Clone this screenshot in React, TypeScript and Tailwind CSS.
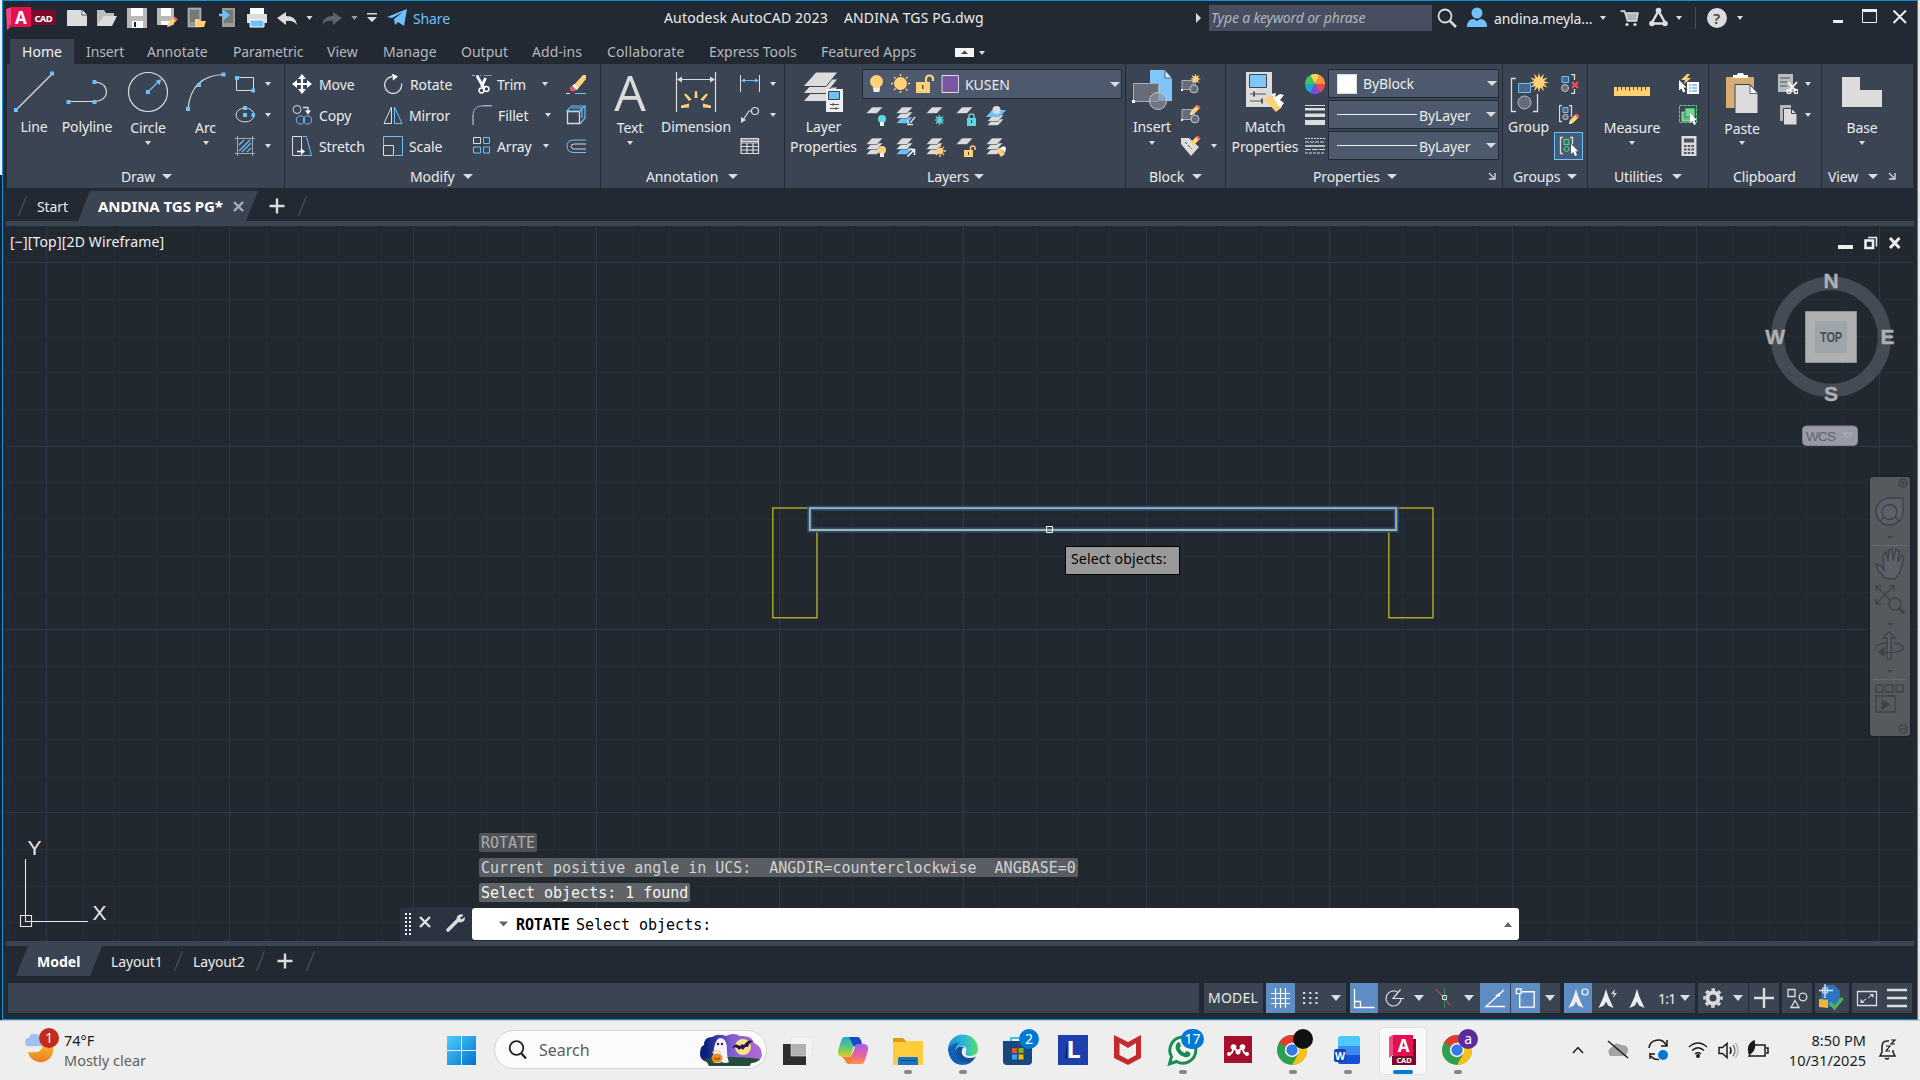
import React from "react";

const W = "#dcdcdc";
const B = "#6fc1fb";
const Y = "#ffd27a";

type Kids = { children?: React.ReactNode };

/* An icon: v is "x y width height" of its view box, drawn at natural size. */
function Ic({ v, children, className = "" }: Kids & { v: string; className?: string }) {
  const [, , w, h] = v.split(" ");
  return (
    <svg viewBox={v} width={w} height={h} fill="none" className={`block shrink-0 ${className}`}>
      {children}
    </svg>
  );
}

function Tri({ className = "" }: { className?: string }) {
  return (
    <svg viewBox="0 0 6 4" width="6" height="4" className={`block shrink-0 ${className}`}>
      <path d="M0 0h6L3 4z" fill={W} />
    </svg>
  );
}

function BigTri({ className = "" }: { className?: string }) {
  return (
    <svg viewBox="0 0 10 5" width="10" height="5" className={`block shrink-0 ${className}`}>
      <path d="M0 0h10L5 5z" fill={W} />
    </svg>
  );
}

function Panel({ className, title, children }: Kids & { className: string; title: React.ReactNode }) {
  return (
    <section className={`flex h-[124px] shrink-0 flex-col bg-[#3b4453] ${className}`}>
      <div className="flex h-[101px]">{children}</div>
      <div className="flex h-[22px] items-center">{title}</div>
    </section>
  );
}

const SEP = "border-r border-[#222933]";

function Big({ className, icon, label, second, arrow, labelClass = "" }: {
  className: string; icon: React.ReactNode; label: string; second?: string; arrow?: boolean; labelClass?: string;
}) {
  return (
    <div className={`flex shrink-0 flex-col items-center ${className}`}>
      <div className="flex h-[53px] items-start pt-1">{icon}</div>
      <div className={`h-5 leading-5 ${labelClass}`}>{label}</div>
      {second && <div className="h-5 leading-5">{second}</div>}
      {arrow && <Tri className="mt-1" />}
    </div>
  );
}

function Cell({ children, className = "" }: Kids & { className?: string }) {
  return <div className={`flex h-[31px] items-center ${className}`}>{children}</div>;
}

function Launcher({ className = "" }: { className?: string }) {
  return (
    <Ic v="0 0 8 8" className={className}>
      <path d="M1 1l5 5M7 1v6H1" stroke={W} strokeWidth="1.3" />
    </Ic>
  );
}

function Sheet({ x, y, c = W }: { x: number; y: number; c?: string }) {
  return <path d={`M${x + 6} ${y}h11l-6 6.500h-11z`} fill={c} stroke="#3b4453" strokeWidth=".6" />;
}

function Stack({ blue }: { blue?: boolean }) {
  return (
    <>
      <Sheet x={0} y={11} c={blue ? B : W} />
      <Sheet x={0} y={6} />
      <Sheet x={0} y={1} />
    </>
  );
}

function Bulb({ x, y, c = Y }: { x: number; y: number; c?: string }) {
  return (
    <g>
      <circle cx={x} cy={y} r="4" fill={c} />
      <path d={`M${x - 2} ${y + 3}h4v4h-4z`} fill="#f2f2f2" />
    </g>
  );
}

function Pencil({ x, y }: { x: number; y: number }) {
  return (
    <g transform={`translate(${x} ${y})`}>
      <path d="M0 10l1-4 6-6 3 3-6 6z" fill={Y} />
      <path d="M6 1l2-1.500 2.800 2.800L9 4z" fill="#f0565e" />
      <path d="M0 10l.8-3 2.200 2.200z" fill="#eee" />
    </g>
  );
}

function Cursor({ x, y, s = 1 }: { x: number; y: number; s?: number }) {
  return <path transform={`translate(${x} ${y}) scale(${s})`} d="M0 0v11l2.500-2 2 4.200 2.200-1L4.800 8H8z" fill="#fff" />;
}

function star(cx: number, cy: number, r: number, q: number, n: number) {
  return Array.from({ length: n * 2 }, (_, i) => {
    const a = (i * Math.PI) / n - Math.PI / 2;
    const k = i % 2 ? q : r;
    return `${cx + k * Math.cos(a)},${cy + k * Math.sin(a)}`;
  }).join(" ");
}

function TitleBar() {
  return (
    <header className="flex h-[38px] shrink-0 items-start pl-[3px] pt-[1px]">
      <Ic v="6 2 54 32">
        <path d="M6 9l6-2v19l-5 4z" fill="#f0487c" />
        <path d="M11 7h20v20H8l3-3z" fill="#e51050" />
        <path d="M31 10h25v15H31z" fill="#7b0a2c" />
        <text x="15" y="23.500" fontSize="17" fontWeight="700" fill="#fff">A</text>
        <text x="34.500" y="21.500" fontSize="9.500" fontWeight="700" fill="#fff" textLength="18">CAD</text>
      </Ic>
      <Ic v="60 2 210 32">
        <path d="M67 10h15l5 5v11H67z" fill={W} />
        <path d="M82 10v5h5" fill="#fff" stroke="#222933" strokeWidth=".8" />
        <path d="M97 10h7l2 3h8v3h-11l-4 8-2 2z" fill="#bdbdbd" />
        <path d="M103 16h14l-5 10H97z" fill={W} />
        <path d="M127 8h20v20h-20z" fill="#b9b9b9" />
        <path d="M131 8h12v8h-12zM132 21h11v7h-11z" fill="#fff" />
        <path d="M134 22h2v5h-2z" fill="#222" />
        <path d="M157 8h17v17h-17z" fill="#b9b9b9" />
        <path d="M161 8h10v8h-10zM161 21h9v4h-9z" fill="#fff" />
        <path d="M167 27l1-4 6-6 3 3-6 6z" fill={Y} />
        <path d="M173 18l2-1.500 3 3-2 1.500z" fill="#f0565e" />
        <path d="M188 8h13v19h-13z" fill="#9a9a9a" stroke="#ddd" strokeWidth=".5" />
        <path d="M190 10h9v12h-9z" fill="#777" />
        <path d="M195 19h4l1 2h6l-2 6h-9z" fill={Y} />
        <path d="M222 8h13v19h-13z" fill="#9a9a9a" />
        <path d="M224 10h9v13h-9z" fill="#777" />
        <path d="M219 15h7m-3-4l5 4-5 4" stroke={B} strokeWidth="2.500" />
        <path d="M250 8h14v7h-14z" fill="#fff" />
        <path d="M247 14h20v9h-20z" fill={W} />
        <path d="M250 20h14v7h-14z" fill={B} stroke="#fff" />
      </Ic>
      <Ic v="270 2 140 32">
        <path d="M277 18l9-6v4q10 0 11 9-4-5-11-4v4z" fill={W} />
        <path d="M306.500 16h6l-3 4z" fill={W} />
        <path d="M342 18l-9-6v4q-10 0-11 9 4-5 11-4v4z" fill="#5d6269" />
        <path d="M351.500 16h6l-3 4z" fill="#9a9da2" />
        <path d="M367 13h10v1.500h-10zM367 17h10l-5 5z" fill={W} />
        <path d="M387 17l20-8-3 17-6-4-3 3-1-6 9-7-11 6z" fill={B} />
      </Ic>
      <div className="w-[251px] pl-[3px] pt-[7px] leading-5 text-[#6fc1fb]">Share</div>
      <div className="w-[180px] whitespace-nowrap pl-[3px] pt-[6px] leading-5 tracking-[0.17px]">Autodesk AutoCAD 2023</div>
      <div className="w-[353px] whitespace-nowrap pl-[3px] pt-[6px] leading-5 tracking-[0.13px]">ANDINA TGS PG.dwg</div>
      <Ic v="1194 2 15 32"><path d="M1196 13l5 5-5 5z" fill={W} /></Ic>
      <div className="mt-[3px] h-[26px] w-[223px] shrink-0 whitespace-nowrap bg-[#464e60] pl-[2px] leading-[26px] tracking-[-0.16px] text-[#b2b6bf] italic">
        Type a keyword or phrase
      </div>
      <Ic v="1432 2 61 32">
        <circle cx="1445" cy="16" r="6.500" stroke={W} strokeWidth="1.800" />
        <path d="M1450 21l6 6" stroke={W} strokeWidth="2.500" />
        <circle cx="1477" cy="13" r="5.500" fill={B} />
        <path d="M1467 27q0-8 7-8l3 2 3-2q7 0 7 8z" fill={B} />
      </Ic>
      <div className="w-[105px] shrink-0 pl-[1px] pt-[7px] leading-5 tracking-[-0.08px]">andina.meyla...</div>
      <Ic v="1598 2 155 32">
        <path d="M1600 16h6l-3 4z" fill={W} />
        <path d="M1620.500 11h4l3 10h9l1.500-8h-13" fill="#b5b5b5" stroke={W} strokeWidth="1.500" />
        <circle cx="1627" cy="24.500" r="1.600" fill={W} /><circle cx="1635" cy="24.500" r="1.600" fill={W} />
        <path d="M1658.500 11l-7 12.500h14z" stroke={W} strokeWidth="2.500" />
        <circle cx="1658.500" cy="10.500" r="2.800" fill={W} /><circle cx="1652" cy="23.500" r="2.800" fill={W} /><circle cx="1665" cy="23.500" r="2.800" fill={W} />
        <path d="M1676 16h6l-3 4z" fill={W} />
        <path d="M1695.500 7v22" stroke="#454d5b" />
        <circle cx="1717" cy="18" r="10" fill={W} />
        <text x="1713.300" y="23.500" fontSize="15" fontWeight="600" fill="#444">?</text>
        <path d="M1737 16h6l-3 4z" fill={W} />
      </Ic>
      <Ic v="1825 2 88 32" className="ml-[72px]">
        <path d="M1833 20h10v3h-10z" fill="#eee" />
        <path d="M1862.500 10v12.500h14V10z" stroke="#eee" /><path d="M1862 9h15v3h-15z" fill="#eee" />
        <path d="M1893.500 10.500l12.500 12.500M1906 10.500L1893.500 23" stroke="#eee" strokeWidth="2" />
      </Ic>
    </header>
  );
}

function RibbonTabs() {
  return (
    <nav className="flex h-[25px] shrink-0 whitespace-nowrap pl-[7px] leading-[25px] tracking-[0px] text-[#b4b8bd]">
      <div className="w-16 bg-[#3b4453] text-center text-[#f2f2f2]">Home</div>
      <div className="w-[60px] pl-[12px] tracking-[-0.1px]">Insert</div>
      <div className="w-[86px] pl-[13px]">Annotate</div>
      <div className="w-[94px] pl-[13px] tracking-[-0.15px]">Parametric</div>
      <div className="w-[56px] pl-[13px]">View</div>
      <div className="w-[77px] pl-[13px]">Manage</div>
      <div className="w-[71px] pl-[14px]">Output</div>
      <div className="w-[76px] pl-[14px] tracking-[0.05px]">Add-ins</div>
      <div className="w-[102px] pl-[13px] tracking-[0.15px]">Collaborate</div>
      <div className="w-[112px] pl-[13px] tracking-[-0.05px]">Express Tools</div>
      <div className="w-[147px] pl-[13px] tracking-[0px]">Featured Apps</div>
      <Ic v="955 39 34 25">
        <path d="M955 48h19v9h-19z" fill="#f4f4f4" />
        <path d="M961 54h7l-3.500-3.500z" fill="#444" />
        <path d="M979 51h6l-3 4z" fill={W} />
      </Ic>
    </nav>
  );
}

const node = (x: number, y: number) => <path key={`${x}-${y}`} d={`M${x - 2} ${y - 2}h4v4h-4z`} fill={B} />;

function DrawPanel() {
  return (
    <Panel className={`w-[278px] ${SEP}`} title={<><span className="w-[155px] pl-[114px]">Draw</span><BigTri /></>}>
      <Big className="w-[54px]" label="Line" icon={
        <Ic v="12 68 44 48"><path d="M16 110L52 74" stroke={W} strokeWidth="1.200" />{node(16, 110)}{node(52, 73.500)}</Ic>} />
      <Big className="w-[52px]" label="Polyline" icon={
        <Ic v="65 68 44 48"><path d="M68 101.500h27q11-1 11.500-9.500-.5-9-11.500-10" stroke={W} strokeWidth="1.200" />{node(68.500, 102)}{node(94.500, 102)}{node(94.500, 82)}</Ic>} />
      <Big className="w-[70px]" arrow label="Circle" labelClass="translate-y-px" icon={
        <Ic v="126 68 44 48"><circle cx="148" cy="92" r="19.500" stroke={W} strokeWidth="1.200" /><path d="M148 92l9-9" stroke={B} strokeWidth="1.200" /><path d="M155.500 81l6-2-2 6z" fill={B} />{node(148, 92)}</Ic>} />
      <Big className="w-[45px]" arrow label="Arc" labelClass="translate-y-px" icon={
        <Ic v="184 68 44 48"><path d="M188 109q3-33 35-34.500" stroke={W} strokeWidth="1.200" />{node(188, 109)}{node(199, 85)}{node(223.500, 74.500)}</Ic>} />
      <div className="ml-[7px] mt-[4px] flex flex-col">
        <Cell className="w-[36px] justify-between"><Ic v="0 0 20 20"><path d="M1.500 3.500h17v13h-17z" stroke={W} />{node(2, 4)}{node(18.500, 16.500)}</Ic><Tri /></Cell>
        <Cell className="w-[36px] justify-between"><Ic v="0 0 20 20"><ellipse cx="10" cy="10" rx="9" ry="7" stroke={W} />{node(10, 3)}{node(10, 10)}{node(18.500, 10)}</Ic><Tri /></Cell>
        <Cell className="w-[36px] justify-between"><Ic v="0 0 20 20"><path d="M2.500 0v20M17.500 0v20M0 2.500h20M0 17.500h20" stroke="#a5a9af" /><path d="M4 9l5-5M4 15L15 4M7 16l9-9M12 16l4-4" stroke={B} strokeWidth="1.200" /></Ic><Tri /></Cell>
      </div>
    </Panel>
  );
}

function Tool({ icon, children, arrow, gap = "pl-[7px]" }: Kids & { icon: React.ReactNode; arrow?: string; gap?: string }) {
  return (
    <Cell>
      {icon}
      <span className={`pt-px ${gap}`}>{children}</span>
      {arrow && <Tri className={arrow} />}
    </Cell>
  );
}

function ModifyPanel() {
  return (
    <Panel className={`w-[316px] ${SEP}`} title={<><span className="w-[178px] pl-[125px]">Modify</span><BigTri /></>}>
      <div className="ml-[7px] mt-[4px] w-[90px]">
        <Tool icon={<Ic v="0 0 20 20"><path d="M10 2v16M2 10h16" stroke="#fff" strokeWidth="2.200" /><path d="M10 0l4 5H6zM10 20l4-5H6zM0 10l5-4v8zM20 10l-5-4v8z" fill="#fff" /></Ic>}>Move</Tool>
        <Tool icon={<Ic v="0 0 20 20"><circle cx="5" cy="4.500" r="4" stroke={W} /><path d="M11 2.500h5v4" stroke={W} strokeWidth="1.300" /><path d="M13 5.500h6l-3 4z" fill="#fff" /><circle cx="8.500" cy="15" r="4.200" stroke={B} /><circle cx="15.500" cy="15" r="4.200" stroke={B} /></Ic>}>Copy</Tool>
        <Tool icon={<Ic v="0 0 20 20"><path d="M.5.500h9v19h-9z" stroke={W} /><path d="M10.500.500h4l5 19h-9" stroke={B} /><path d="M5 15.500h6m-2-2.500l3 2.500-3 2.500" stroke="#fff" strokeWidth="1.300" /></Ic>}>Stretch</Tool>
      </div>
      <div className="mt-[4px] w-[90px] pl-px">
        <Tool gap="pl-[7px]" icon={<Ic v="0 0 20 20"><path d="M9 2.500a8.500 8.500 0 1 0 9.500 7" stroke={W} strokeWidth="1.300" /><path d="M9-.5l6 3-5 4z" fill="#fff" /></Ic>}>Rotate</Tool>
        <Tool gap="pl-[6px]" icon={<Ic v="0 0 20 20"><path d="M8.500 2v16.500H1z" stroke={W} /><path d="M11.500 2v16.500H19z" stroke={B} /></Ic>}>Mirror</Tool>
        <Tool gap="pl-[6px]" icon={<Ic v="0 0 20 20"><path d="M.5 9V.5h19v19H12" stroke={B} /><path d="M.5 9.500h10v10H.5z" stroke={W} /></Ic>}>Scale</Tool>
      </div>
      <div className="mt-[4px] w-[94px]">
        <Tool arrow="ml-[15px]" gap="w-[35px] pl-[5px]" icon={<Ic v="0 0 20 20"><path d="M0 1.500h9" stroke={B} strokeDasharray="3 1" /><path d="M12 1.500h8" stroke="#8d949e" /><path d="M5 2l7 12M13.500 4l-4 9" stroke="#fff" strokeWidth="2.800" /><circle cx="9.500" cy="16.500" r="2.400" stroke="#fff" strokeWidth="1.500" /><circle cx="14.500" cy="15" r="2.400" stroke="#fff" strokeWidth="1.500" /></Ic>}>Trim</Tool>
        <Tool arrow="ml-[18px]" gap="w-[35px] pl-[6px]" icon={<Ic v="0 0 20 20"><path d="M1 10Q1 1 11 .8" stroke={B} /><path d="M1 10v10M11 .8h9" stroke={W} /></Ic>}>Fillet</Tool>
        <Tool arrow="ml-[16px]" gap="w-[35px] pl-[5px]" icon={<Ic v="0 0 20 20"><path d="M1.500 1.500h7v6h-7z" stroke={W} /><path d="M11.500 1.500h6v6h-6zM1.500 11h7v6h-7zM11.500 11h6v6h-6z" stroke={B} /></Ic>}>Array</Tool>
      </div>
      <div className="mt-[4px]">
        <Cell><Ic v="0 0 20 20"><path d="M7 12L17 1h3v4L11 16z" fill={Y} /><path d="M6 12l4 4 2-1.500L8.500 10z" fill="#fff" /><path d="M4 16q-1-3 2-4l4 4q-3 3-6 0z" fill="#f0565e" /><path d="M0 19.500h4" stroke={W} /><path d="M9 19.500h11" stroke={B} /></Ic></Cell>
        <Cell><Ic v="0 0 20 20"><path d="M1.500 6.500h12v12h-12z" stroke={W} strokeWidth="1.300" /><path d="M.8 6L6 1h13L14 6zM19 1v12l-5 6M6 3h10v10" stroke={B} strokeWidth="1.200" /></Ic></Cell>
        <Cell><Ic v="0 0 20 20"><path d="M20 4H8q-7 0-7 6 0 6.500 7 6.500h12" stroke={B} /><path d="M20 8H8.500q-3.500 0-3.500 2.300 0 2.700 3.500 2.700H20" stroke={W} /></Ic></Cell>
      </div>
    </Panel>
  );
}

function AnnotationPanel() {
  return (
    <Panel className={`w-[184px] ${SEP}`} title={<><span className="w-[127px] whitespace-nowrap pl-[45px]">Annotation</span><BigTri /></>}>
      <div className="flex w-[58px] shrink-0 flex-col items-center">
        <div className="mt-[3px] h-[50px] w-[34px] text-center font-['Open_Sans',sans-serif] text-[50px] leading-[50px] tracking-normal text-[#dcdcdc]">A</div>
        <div className="h-5 translate-y-px leading-5">Text</div>
        <Tri className="mt-1" />
      </div>
      <Big className="w-[74px]" label="Dimension" icon={
        <Ic v="674 68 44 48">
          <path d="M676.500 72v40M715.500 72v40M678 79.500h36" stroke={W} strokeWidth="1.200" />
          <path d="M677 79.500l5-3v6zM715 79.500l-5-3v6z" fill={W} />
          <path d="M694.500 98l.5-7h2l.5 7zM684 94.500l2-1 5.500 6-2.500 1.500zM708 94.500l-2-1-5.500 6 2.500 1.500zM681 105.500l8-2v4l-8 .5zM711 105.500l-8-2v4l8 .5z" fill={Y} />
        </Ic>} />
      <div className="ml-[7px] mt-[4px]">
        <Cell className="w-[36px] justify-between"><Ic v="0 0 20 20"><path d="M.5 1v17M19.500 1v17" stroke={W} /><path d="M2 6.500h16" stroke={B} /><path d="M1 6.500l4-2v4zM19 6.500l-4-2v4z" fill={B} /></Ic><Tri /></Cell>
        <Cell className="w-[36px] justify-between"><Ic v="0 0 20 20"><circle cx="15" cy="6" r="3.500" stroke={W} strokeWidth="1.200" /><path d="M11.500 6H9l-6 9" stroke={W} strokeWidth="1.200" /><path d="M1 18v-6l5 3z" fill={W} /></Ic><Tri /></Cell>
        <Cell><Ic v="0 0 20 20"><path d="M1 2h18v4H1z" fill={W} /><path d="M1 2.500h17.500v15H1zM1 7h18M1 10.500h18M1 14h18M7 7v11M13 7v11" stroke={W} strokeWidth="1.200" /><path d="M2 4h16" stroke="#3b4453" /></Ic></Cell>
      </div>
    </Panel>
  );
}

function LayersPanel() {
  return (
    <Panel className={`w-[341px] ${SEP}`} title={<><span className="w-[189px] pl-[142px]">Layers</span><BigTri /></>}>
      <Big className="w-[77px]" label="Layer" second="Properties" icon={
        <Ic v="803 68 44 48">
          <path d="M817 87h22l-12 14.500h-23z" fill={W} stroke="#3b4453" />
          <path d="M817 79h22l-12 14.500h-23z" fill={W} stroke="#3b4453" />
          <path d="M817 72h22l-12 14.500h-23z" fill={W} stroke="#3b4453" />
          <path d="M827 89h17v23h-17z" fill="#f0f0f0" />
          <path d="M829.500 91.500h11v8h-11z" fill={B} stroke="#3b4453" />
          <path d="M831 104.500h9M831 108.500h9M834 103v3M837 107v3" stroke="#555" />
        </Ic>} />
      <div className="mt-[5px]">
        <div className="flex h-[30px] w-[260px] items-center border border-[#232a36] bg-[#4d596c]">
          <Ic v="863 70 99 28">
            <circle cx="876.500" cy="81.500" r="6.500" fill={Y} /><path d="M873 86h7v4h-7z" fill={Y} /><path d="M873.500 88h6v4h-6z" fill="#eee" />
            <circle cx="900.500" cy="83.500" r="6.500" fill={Y} />
            <path d="M900.500 74v2m0 15v2M891 83.500h2m15 0h2M894 77l1.500 1.500m10.500 10.500l1.500 1.500M894 90l1.500-1.500M906 78.500l1.500-1.500" stroke={Y} strokeWidth="1.500" />
            <path d="M916 82h14v11h-14z" fill={Y} /><path d="M926 82v-3q0-3.500 3.500-3.500t3.500 3.500v2" stroke={Y} strokeWidth="2.200" /><path d="M922 85h1.500v4H922z" fill="#554" />
            <path d="M942 75.500h16.500v17H942z" fill="#7c55a5" stroke="#ddd" />
          </Ic>
          <span className="w-[148px] pl-[3px] tracking-[-0.05px]">KUSEN</span>
          <BigTri />
        </div>
        <div className="ml-1 mt-[1px] flex h-[31px] items-center gap-[10px]">
          <Ic v="0 0 20 20"><Sheet x={0} y={1} /><Bulb x={16} y={13} c="#5fd8e0" /></Ic>
          <Ic v="0 0 20 20"><Stack blue /><path d="M19 11l-5 6m-2-3v4.500h5" stroke={W} strokeWidth="1.500" /></Ic>
          <Ic v="0 0 20 20"><Sheet x={0} y={1} /><path d="M13.500 9v10M9 14h9M10 10.500l7 7M17 10.500l-7 7" stroke="#5fd8e0" strokeWidth="1.200" /><circle cx="13.500" cy="14" r="2.800" stroke="#5fd8e0" strokeWidth=".9" /></Ic>
          <Ic v="0 0 20 20"><Sheet x={0} y={1} /><path d="M11 12h9v8h-9z" fill="#5fd8e0" /><path d="M13 12v-2q0-2 2.500-2t2.500 2v2" stroke="#5fd8e0" strokeWidth="1.500" /><path d="M15 14h1v3h-1z" fill="#234" /></Ic>
          <Ic v="0 0 20 20"><Sheet x={1} y={13} /><Sheet x={1} y={9} /><path d="M6 4h14l-6 7H0z" fill={B} /><circle cx="10.500" cy="4" r="4" fill={W} /></Ic>
        </div>
        <div className="ml-1 flex h-[31px] items-center gap-[10px]">
          <Ic v="0 0 20 20"><Stack /><Bulb x={16} y={13} /></Ic>
          <Ic v="0 0 20 20"><Stack blue /><path d="M11.500 19.500l6-6m-4-1h5V18" stroke="#fff" strokeWidth="1.500" /></Ic>
          <Ic v="0 0 20 20"><Stack /><circle cx="14" cy="14" r="3.500" fill={Y} /><path d="M14 8v2m0 8v2M8 14h2m8 0h2M10 10l1 1m6 6l1 1M10 18l1-1m6-6l1-1" stroke={Y} strokeWidth="1.400" /></Ic>
          <Ic v="0 0 20 20"><Sheet x={0} y={1} /><path d="M8 13h9v7H8z" fill={Y} /><path d="M14.500 13v-2q0-2 2.200-2t2.300 2v2" stroke={Y} strokeWidth="1.500" /><path d="M12 15h1v3h-1z" fill="#443" /></Ic>
          <Ic v="0 0 20 20"><Stack /><path d="M10 13l4-2 5 6-4 3z" fill={Y} /><path d="M14 11l4-2 2 2-1 5z" fill="#fff" /></Ic>
        </div>
      </div>
    </Panel>
  );
}

function BlockPanel() {
  return (
    <Panel className={`w-[100px] ${SEP}`} title={<><span className="w-[66px] pl-[23px] tracking-[-0.05px]">Block</span><BigTri /></>}>
      <Big className="w-[52px]" arrow label="Insert" labelClass="" icon={
        <Ic v="1130 68 44 48">
          <path d="M1150 70h15l7 8v23h-22z" fill="#7fc6fb" /><path d="M1165 70v8h7z" fill="#d5edff" stroke="#3b4453" strokeWidth=".8" />
          <path d="M1133.500 83.500h25v18h-25z" fill="#676d78" stroke="#a9adb4" />
          <circle cx="1158" cy="101" r="8.500" fill="#8b929e" fillOpacity=".65" stroke="#c3c6ca" />
          <path d="M1132 100h3v3h-3z" fill="#fff" />
        </Ic>} />
      <div className="ml-[3px] mt-[4px]">
        <Cell><Ic v="0 0 20 20"><path d="M1 6.500h12v9H1z" fill="#676d78" stroke="#a9adb4" /><circle cx="13" cy="15" r="4" fill="#676d78" stroke="#c3c6ca" /><polygon points={star(14.500, 5, 5.500, 2.600, 8)} fill={Y} /><path d="M0 15h2v2H0z" fill="#fff" /></Ic></Cell>
        <Cell><Ic v="0 0 20 20"><path d="M1 4.500h12v10H1z" fill="#676d78" stroke="#a9adb4" /><circle cx="14" cy="14" r="4" fill="#676d78" stroke="#c3c6ca" /><Pencil x={9} y={0} /><path d="M0 14h2v2H0z" fill="#fff" /></Ic></Cell>
        <Cell className="w-[36px] justify-between"><Ic v="0 0 20 20"><path d="M0 2h8l10 9-8 9L0 8z" fill={W} /><path d="M4 6l7 7" stroke="#3b4453" strokeDasharray="3 1.500" /><Pencil x={9} y={0} /></Ic><Tri /></Cell>
      </div>
    </Panel>
  );
}

function Combo({ children }: Kids) {
  return <div className="flex h-[29px] w-[171px] items-center border border-[#232a36] bg-[#4d596c]">{children}</div>;
}

function PropertiesPanel() {
  return (
    <Panel className={`w-[277px] ${SEP}`} title={<><span className="w-[161px] pl-[87px]">Properties</span><BigTri /><Launcher className="ml-[91px]" /></>}>
      <Big className="w-[78px]" label="Match" second="Properties" icon={
        <Ic v="1243 68 44 48">
          <path d="M1246 72h26v35h-26z" fill={W} /><path d="M1249.500 74.500h17v13h-17z" fill="#7fc6fb" stroke="#3b4453" />
          <path d="M1250 94h16M1250 101h13" stroke="#555" /><path d="M1254 91.500v5M1262 98.500v5" stroke="#555" strokeWidth="2" />
          <path d="M1264 99l7-4 11 12-6 5z" fill={Y} /><path d="M1271 94l5-1-1 4 5-3 4 1-4 5 4 3-4 5z" fill="#fff" />
        </Ic>} />
      <div className="ml-px mt-[4px] flex w-[23px] flex-col">
        <Cell>
          <Ic v="-10 -10 20 20">
            <path d="M0 0L-4.900-8.700A10 10 0 0 1 4.900-8.700z" fill="#ffd24d" /><path d="M0 0L4.900-8.700A10 10 0 0 1 10 0z" fill="#ff9340" />
            <path d="M0 0H10A10 10 0 0 1 4.900 8.700z" fill="#e6484f" /><path d="M0 0L4.900 8.700A10 10 0 0 1-4.900 8.700z" fill="#7b4de0" />
            <path d="M0 0L-4.900 8.700A10 10 0 0 1-10 0z" fill="#18a9d0" /><path d="M0 0H-10A10 10 0 0 1-4.900-8.700z" fill="#49bf68" />
          </Ic>
        </Cell>
        <Cell><Ic v="0 0 20 20"><path d="M0 0h20v1H0zM0 3h20v2.500H0zM0 8.500h20V12H0zM0 15h20v5H0z" fill={W} /></Ic></Cell>
        <Cell><Ic v="0 0 20 20"><path d="M0 2.500h20" stroke={W} strokeDasharray="2 1" /><path d="M0 6h20" stroke={W} strokeDasharray="4 1" /><path d="M0 10h20" stroke={W} strokeWidth="1.500" /><path d="M0 13.500h20" stroke={W} strokeDasharray="6 1" /><path d="M0 17h20" stroke={W} strokeDasharray="3 1" /></Ic></Cell>
      </div>
      <div className="mt-[5px] flex flex-col gap-[2px]">
        <Combo><div className="ml-2 h-5 w-5 border border-[#ddd] bg-white" /><span className="w-[130px] pl-[6px]">ByBlock</span><BigTri /></Combo>
        <Combo><div className="ml-2 h-px w-20 bg-[#eee]" /><span className="w-[64px] pl-[2px] pt-px">ByLayer</span><BigTri className="ml-[5px]" /></Combo>
        <Combo><div className="ml-2 h-px w-20 bg-[#eee]" /><span className="w-[64px] pl-[2px] pt-px">ByLayer</span><BigTri className="ml-[5px]" /></Combo>
      </div>
    </Panel>
  );
}

function GroupsPanel() {
  return (
    <Panel className={`w-[85px] ${SEP}`} title={<><span className="w-[64px] pl-[10px]">Groups</span><BigTri /></>}>
      <Big className="w-[51px]" label="Group" icon={
        <Ic v="1506 68 44 48">
          <path d="M1515 78.500h-4.500v33h4.500M1532 111.500h4.500V94" stroke={W} strokeWidth="1.300" />
          <path d="M1517.500 83.500h12v9h-12z" fill="#44688c" stroke={B} /><circle cx="1523.500" cy="102.500" r="6.500" fill="#676d78" stroke="#b5b8bd" />
          <polygon points={star(1538, 82.500, 10, 5, 12)} fill={Y} />
        </Ic>} />
      <div className="mt-[4px] flex w-[29px] flex-col items-center">
        <Cell><Ic v="0 0 20 20"><path d="M3 2.500h6.500v6H3z" fill="#44688c" stroke={B} /><circle cx="6" cy="14" r="3.500" fill="#676d78" stroke="#c3c6ca" /><path d="M12 .5h3.500V6M15.500 15v4.500H12" stroke={W} strokeWidth="1.300" /><path d="M13 8l6 6M19 8l-6 6" stroke="#f0505a" strokeWidth="2.200" /></Ic></Cell>
        <Cell><Ic v="0 0 20 20"><path d="M3 .5H.5v16H3M10 .5h2.500V12" stroke={W} strokeWidth="1.300" /><path d="M4 2.500h5v5H4z" fill="#44688c" stroke={B} /><circle cx="6.500" cy="12" r="2.700" fill="#676d78" stroke="#c3c6ca" /><Pencil x={10} y={9} /></Ic></Cell>
        <div className="mt-[2px] flex h-7 w-[29px] items-center justify-center border border-[#6fc1fb] bg-[#455b78]"><Ic v="0 0 20 20"><path d="M4 1.500H1.500v16H4M11 1.500h2.500V8" stroke={W} strokeWidth="1.300" /><path d="M5 3.500h5v5H5zM7.500 10.500a2.500 2.500 0 1 0 .1 0z" fill="#2f7a50" stroke="#6ad18e" /><Cursor x={12} y={8} s={0.9} /></Ic></div>
      </div>
    </Panel>
  );
}

function UtilitiesPanel() {
  return (
    <Panel className={`w-[121px] ${SEP}`} title={<><span className="w-[84px] pl-[26px]">Utilities</span><BigTri /></>}>
      <Big className="w-[88px]" arrow label="Measure" labelClass="translate-y-px" icon={
        <Ic v="1610 68 44 48"><path d="M1614 87h36v9h-36z" fill={Y} /><path d="M1617.500 87v4M1621.500 87v3M1625.500 87v3M1629.500 87v4M1633.500 87v3M1637.500 87v3M1641.500 87v4M1645.500 87v3" stroke="#5c4c2c" /></Ic>} />
      <div className="ml-[3px] mt-[4px]">
        <Cell><Ic v="0 0 20 20"><path d="M8 0l-6 6h4l-1 4 7-6H8l3-4z" fill={Y} /><path d="M8 8h12v12H8z" fill="#fff" /><path d="M10 11h2m1 0h5M10 14h2m1 0h5M10 17h2m1 0h5" stroke="#3c8fd8" strokeWidth="1.200" /><Cursor x={0} y={6} s={0.95} /></Ic></Cell>
        <Cell><Ic v="0 0 20 20"><path d="M.5.500h17v17H.5z" stroke="#5fd080" strokeDasharray="3 1" /><path d="M3 7h9v9H3z" fill="#5fc583" stroke="#a4e7b9" /><path d="M6 3h10v9H6z" fill="#76d394" stroke="#2d6e45" strokeWidth=".7" /><Cursor x={11} y={8} s={0.9} /></Ic></Cell>
        <Cell><Ic v="0 0 20 20"><path d="M2.500 0h15v20h-15z" fill={W} /><path d="M5 2.500h10v4H5z" fill="#4a5260" /><path d="M5 10h10M5 13.500h10M5 17h10" stroke="#4a5260" strokeWidth="2" strokeDasharray="2.500 1.200" /></Ic></Cell>
      </div>
    </Panel>
  );
}

function ClipboardPanel() {
  return (
    <Panel className={`w-[113px] ${SEP}`} title={<span className="pl-[24px]">Clipboard</span>}>
      <Big className="w-[66px]" arrow label="Paste" labelClass="translate-y-[2px]" icon={
        <Ic v="1720 68 44 48">
          <path d="M1726 77h28v31h-28z" fill="#d8ab73" /><path d="M1733 77v-2h4l1-2h5l1 2h4v3h-15z" fill="#fff" />
          <path d="M1735 84.500h15l8 9v20h-23z" fill={W} stroke="#3b4453" /><path d="M1750 85v8.500h8z" fill="#fff" stroke="#3b4453" strokeWidth=".8" />
        </Ic>} />
      <div className="ml-[3px] mt-[4px]">
        <Cell className="w-[33px] justify-between"><Ic v="0 0 20 20"><path d="M0 0h15v18H0z" fill="#b8bbbf" /><path d="M2 4h10M2 8h8M2 12h7" stroke="#4a5260" strokeWidth="1.200" /><path d="M10 8l8 9M19 8l-8 9" stroke="#fff" strokeWidth="1.800" /><circle cx="11" cy="17.500" r="2" stroke="#fff" strokeWidth="1.300" /><circle cx="18" cy="17.500" r="2" stroke="#fff" strokeWidth="1.300" /></Ic><Tri /></Cell>
        <Cell className="w-[33px] justify-between"><Ic v="0 0 20 20"><path d="M2 0h11v16H2z" fill="#b3b6ba" /><path d="M5.500 3.500h8l5.500 5V20H5.500z" fill={W} stroke="#3b4453" /><path d="M13.500 3.500v5H19" stroke="#3b4453" /></Ic><Tri /></Cell>
      </div>
    </Panel>
  );
}

function ViewPanel() {
  return (
    <Panel className="w-[91px]" title={<><span className="w-[46px] pl-[6px]">View</span><BigTri /><Launcher className="ml-[10px]" /></>}>
      <Big className="w-[80px]" arrow label="Base" labelClass="translate-y-px" icon={
        <Ic v="1840 68 44 48"><path d="M1842 77h18v13h22v17h-40z" fill={W} /></Ic>} />
    </Panel>
  );
}

function Slash({ className = "" }: { className?: string }) {
  return <Ic v="0 0 9 20" className={className}><path d="M.5 20L8.500 0" stroke="#4b5361" strokeWidth="1.200" /></Ic>;
}

function Plus({ className = "" }: { className?: string }) {
  return <Ic v="0 0 16 16" className={className}><path d="M8 .5v15M.5 8h15" stroke={W} strokeWidth="2.400" /></Ic>;
}

function DocTabs() {
  return (
    <div className="flex h-[33px] shrink-0 items-center pl-[15px]">
      <Slash className="mt-[2px]" />
      <span className="w-[51px] pl-[10px] pt-[3px]">Start</span>
      <div className="flex h-[30px] w-[180px] items-center self-end bg-[#3b4453] font-bold [clip-path:polygon(12px_0,100%_0,168px_100%,0_100%)]">
        <span className="w-[155px] whitespace-nowrap pl-5 text-[15px] tracking-[-0.05px] text-white">ANDINA TGS PG*</span>
        <Ic v="0 0 11 11"><path d="M1 1l9 9M10 1l-9 9" stroke="#a9adb4" strokeWidth="2.400" /></Ic>
      </div>
      <Plus className="ml-[11px] mt-[3px]" />
      <Slash className="ml-[13px] mt-[2px]" />
    </div>
  );
}

function NavBar() {
  const s = "#3e434a";
  return (
    <Ic v="1870 477 40 259" className="rounded-[3px] bg-[#555a5f] shadow-[0_0_3px_#14181e]">
      <g stroke={s} strokeWidth="1.400">
        <circle cx="1903" cy="483" r="4" /><path d="M1901 481l4 4M1905 481l-4 4" />
        <path d="M1890 498h13v14a13.500 13.500 0 1 1-13-14z" fill="#5b6069" /><circle cx="1889.500" cy="512" r="7.500" /><path d="M1880 521l4-4M1899 521l-4-4" />
        <path d="M1885 578l-7-8-2-6 5 2 3 4-1-14 3-4 2 9 1-11 3-1 1 11 3-10 3 1-1 11 4-7 2 2-4 15-5 7z" fill="#5b6069" />
        <path d="M1876 586l18 18M1894 586l-18 18M1876 591v-5h5M1889 586h5v5M1876 599v5h5" /><circle cx="1895" cy="604" r="6" fill="#555a5f" />
        <path d="M1899 608l5 5" strokeWidth="3" />
        <path d="M1887 659v-21h-4l6-6 6 6h-4v21z" fill="#5b6069" /><path d="M1894 643q12 2 9 6-5 5-22 3m5-9q-13 2-10 6" /><path d="M1884 648v8l-5-4z" fill={s} />
        <path d="M1876 685h7v7h-7zM1886 685h7v7h-7zM1896 685h7v7h-7zM1876 696h19v16h-19z" /><path d="M1882 700v9l7-4.500z" fill={s} />
        <circle cx="1903" cy="729" r="4" /><path d="M1900 729h6" />
      </g>
      <path d="M1887 536h6l-3 3zM1887 623h6l-3 3zM1887 670h6l-3 3z" fill={s} />
      <path d="M1873 545.500h34M1873 679.500h34" stroke="#646a70" />
    </Ic>
  );
}

const majorX = Array.from({ length: 11 }, (_, i) => Math.round(46 + i * 183.3) + 0.5);
const minorX = Array.from({ length: 52 }, (_, i) => Math.round(9.3 + i * 36.66) + 0.5);
const majorY = Array.from({ length: 4 }, (_, i) => Math.round(262.4 + i * 183.3) + 0.5);
const minorY = Array.from({ length: 20 }, (_, i) => Math.round(225.8 + i * 36.66) + 0.5);

function History({ children, className }: Kids & { className: string }) {
  return <div className={`h-[19px] w-fit whitespace-pre rounded-[2px] px-[2px] leading-[20px] ${className}`}>{children}</div>;
}

function Canvas() {
  return (
    <main className="relative ml-[3px] h-[715px] w-[1908px] shrink-0 overflow-hidden bg-[#222830]">
      <Ic v="6 226 1908 715">
        {minorX.map((x) => <path key={x} d={`M${x} 226V941`} stroke="#262d38" />)}
        {minorY.map((y) => <path key={y} d={`M6 ${y}H1914`} stroke="#262d38" />)}
        {majorX.map((x) => <path key={x} d={`M${x} 226V941`} stroke="#2f3645" />)}
        {majorY.map((y) => <path key={y} d={`M6 ${y}H1914`} stroke="#2f3645" />)}
        <g stroke="#aba51f" strokeWidth="1.500">
          <path d="M809 508H772.800V617.700H817V530M1396 508h37V617.700h-44.200V530" />
        </g>
        <path d="M809.800 508.200H1396.200V530H809.800z" stroke="#2a4c8c" strokeWidth="5" />
        <path d="M809.800 508.200H1396.200V530H809.800z" stroke="#a7b78f" strokeWidth="1.800" />
        <path d="M1046.500 526.500h6v6h-6z" stroke="#fff" />
        <path d="M25.500 859v62.500H88M20.500 915.500h11v11h-11z" stroke="#e8e8e8" strokeWidth="1.100" />
        <g fill="#e8e8e8" fontFamily="Liberation Sans, sans-serif" fontSize="21">
          <text x="27.500" y="854.500">Y</text>
          <text x="92.500" y="919.500">X</text>
        </g>
        <circle cx="1831" cy="337" r="53.500" stroke="#454b54" strokeWidth="13.500" />
        <path d="M1805.500 311.500h51v51h-51z" fill="#aeb0b2" stroke="#8e9194" />
        <path d="M1815 321h32v32h-32z" fill="#9ea4aa" />
        <g fill="#adafb2" stroke="#adafb2" strokeWidth=".4" fontFamily="Liberation Sans, sans-serif" fontWeight="700" fontSize="21" textAnchor="middle">
          <text x="1831" y="288">N</text>
          <text x="1775" y="344">W</text>
          <text x="1887.500" y="344">E</text>
          <text x="1831" y="400.500">S</text>
          <text x="1831" y="342" fontSize="14" fill="#4a4f57" stroke="none" textLength="22" lengthAdjust="spacingAndGlyphs">TOP</text>
        </g>
        <rect x="1802.500" y="426" width="55" height="19.500" rx="4" fill="#9a9ba7" stroke="#81838d" />
        <text x="1806" y="440.500" fontFamily="Liberation Sans, sans-serif" fontSize="13.500" fill="#62656f" textLength="30">WCS</text>
        <path d="M1843 433h9l-4.500 4.500z" stroke="#b4b5bf" />
        <path d="M1838 245h15v4h-15z" fill="#eee" />
        <path d="M1865.500 240.500h7.500v7.500h-7.500z" stroke="#eee" strokeWidth="2.600" /><path d="M1868 237.500h8.500v9" stroke="#eee" strokeWidth="1.500" />
        <path d="M1890 238l9.500 10M1899.500 238l-9.500 10" stroke="#eee" strokeWidth="3" />
      </Ic>
      <div className="absolute left-1 top-[6px] whitespace-nowrap leading-5 tracking-[0.17px] text-[#f0f0f0]">[−][Top][2D Wireframe]</div>
      <div className="absolute right-1 top-[251px]"><NavBar /></div>
      <div className="absolute left-[1059px] top-[320px] h-[29px] w-[115px] whitespace-nowrap border border-black bg-[#999] pl-[5px] leading-[24px] tracking-[0.15px] text-black">Select objects:</div>
      <div className="absolute bottom-0 left-[394px] flex h-[108px] w-[1120px] flex-col font-['DejaVu_Sans_Mono',monospace] text-[15px] tracking-[-0.02px]">
        <div className="flex h-[74px] flex-col gap-[6px] pl-[79px]">
          <History className="bg-[#4f5357] text-[#a9acaf]">ROTATE</History>
          <History className="bg-[#595c60] text-[#d0d2d4]">{"Current positive angle in UCS:  ANGDIR=counterclockwise  ANGBASE=0"}</History>
          <History className="bg-[#616466] text-[#f4f4f4]">Select objects: 1 found</History>
        </div>
        <div className="flex h-[34px]">
          <Ic v="400 907 72 34" className="rounded-l bg-[#2c3340]">
            <path d="M406 913v22M410 913v22" stroke="#eee" strokeWidth="2" strokeDasharray="2 2" />
            <path d="M420 917l10 10M430 917l-10 10" stroke="#e0e0e0" strokeWidth="2.400" />
            <path d="M448 930l11-11" stroke={W} strokeWidth="3.600" strokeLinecap="round" />
            <path d="M463.500 915.500q-3-2.500-6 .5-2 3 .5 5.500 3 2 6-.5 1.500-2 .8-4l-3.500 2.500-1.500-1.500z" fill={W} />
          </Ic>
          <div className="my-[1px] flex w-[1047px] items-center rounded-[3px] bg-white text-black">
            <Ic v="0 0 9 6" className="ml-[27px]"><path d="M0 .5h9L4.500 5.500z" fill="#666" /></Ic>
            <span className="ml-2 w-[60px] whitespace-nowrap pt-[2px] font-bold tracking-[-0.1px]">ROTATE</span>
            <span className="w-[928px] pt-[2px]">Select objects:</span>
            <Ic v="0 0 8 5"><path d="M0 5h8L4 0z" fill="#666" /></Ic>
          </div>
        </div>
      </div>
    </main>
  );
}

function LayoutTabs() {
  return (
    <div className="flex h-[37px] shrink-0 items-start pl-[13px]">
      <div className="h-[30px] w-[86px] bg-[#3b4453] pl-[21px] font-bold leading-[31px] tracking-[0px] text-white [clip-path:polygon(12px_0,100%_0,74px_100%,0_100%)]">Model</div>
      <span className="w-[72px] pl-[9px] leading-[31px]">Layout1</span>
      <Slash className="mt-[5px]" />
      <span className="w-[73px] pl-[10px] leading-[31px]">Layout2</span>
      <Slash className="mt-[5px]" />
      <Plus className="ml-[12px] mt-[7px]" />
      <Slash className="ml-[13px] mt-[5px]" />
    </div>
  );
}

function Compass({ x }: { x: number }) {
  return <path d={`M${x} 989l2.500 8 5 11-5.500-2.500-2-4-2 4-5.500 2.500 5-11z`} fill="#eee" />;
}

function StatusBar() {
  const p = "bg-[#3b4453]";
  const on = "bg-[#5d8dc3]";
  return (
    <div className="flex h-[30px] shrink-0 pl-[5px]">
      <div className={`w-[1191px] ${p}`} />
      <div className={`ml-[5px] w-[59px] pl-[4px] leading-[30px] tracking-[0.2px] ${p}`}>MODEL</div>
      <Ic v="1266 983 29 30" className={`ml-[3px] ${on}`}><path d="M1275.500 988v20M1280.500 988v20M1285.500 988v20M1271 993.500h19M1271 998.500h19M1271 1003.500h19" stroke="#fff" strokeWidth="1.200" /></Ic>
      <Ic v="1295 983 51 30" className={p}>
        {[992, 997, 1002].map((y) => <path key={y} d={`M1303 ${y + 1}h15`} stroke={W} strokeWidth="2.200" strokeDasharray="2.200 4" />)}
        <path d="M1331 995h10l-5 6z" fill={W} />
      </Ic>
      <Ic v="1350 983 28 30" className={`ml-1 ${on}`}><path d="M1354.500 989v18.500h20M1354.500 1001.500h6v6" stroke="#fff" strokeWidth="1.300" /></Ic>
      <Ic v="1378 983 102 30" className={p}>
        <path d="M1398 992.500a7.500 7.500 0 1 0 3 6M1404 998.500h-11l7.500-9" stroke={W} strokeWidth="1.200" /><path d="M1414 995h10l-5 6z" fill={W} />
        <path d="M1436 989l14 16" stroke="#b24b50" strokeWidth="1.200" /><path d="M1444.500 988v20" stroke="#3b8a60" /><path d="M1442.500 995.500h4v4h-4z" stroke={W} /><path d="M1464 995h10l-5 6z" fill={W} />
      </Ic>
      <Ic v="1480 983 30 30" className={on}><path d="M1504 990l-18 16.500h19" stroke="#fff" strokeWidth="1.300" /><path d="M1495 996l5 .5-.5-4z" fill="#fff" /></Ic>
      <Ic v="1510 983 30 30" className={`border-l border-[#3b4453] ${on}`}><path d="M1519 991.500h15v16h-15v-13" stroke="#fff" strokeWidth="1.400" /><path d="M1515.500 988.500h5v5h-5z" fill="#5d8dc3" stroke="#fff" strokeWidth="1.300" /></Ic>
      <Ic v="1540 983 20 30" className={p}><path d="M1545 995h10l-5 6z" fill={W} /></Ic>
      <Ic v="1564 983 28 30" className={`ml-1 ${on}`}><Compass x={1576} /><circle cx="1585" cy="992" r="3" stroke="#fff" strokeWidth="1.200" /></Ic>
      <Ic v="1592 983 63 30" className={p}><Compass x={1606} /><path d="M1615 989l-4 5h3l-1 4 4-5h-3z" fill={W} /><Compass x={1637} /></Ic>
      <div className={`flex w-[40px] items-center pl-[3px] ${p}`}><span className="w-[22px] tracking-[-0.8px]">1:1</span><Ic v="0 0 10 6"><path d="M0 0h10L5 6z" fill={W} /></Ic></div>
      <Ic v="1698 983 50 30" className={`ml-[3px] ${p}`}><circle cx="1713" cy="998" r="5.500" stroke={W} strokeWidth="4" /><circle cx="1713" cy="998" r="8.500" stroke={W} strokeWidth="2.500" strokeDasharray="3.600 3.070" strokeDashoffset="1.800" /><path d="M1733 995h10l-5 6z" fill={W} /></Ic>
      <Ic v="1749 983 30 30" className={`ml-px ${p}`}><path d="M1764 988v20M1754 998h20" stroke={W} strokeWidth="2.400" /></Ic>
      <Ic v="1782 983 30 30" className={`ml-[3px] ${p}`}><path d="M1788 989.500h7v7h-7zM1791 1007.500l4-7 4 7z" stroke={W} strokeWidth="1.300" /><circle cx="1803" cy="997" r="3.800" stroke={W} strokeWidth="1.300" /></Ic>
      <Ic v="1815 983 34 30" className={`ml-[3px] ${p}`}>
        <path d="M1824 985h10l6 6v11l-5 5h-12l-3-6z" fill="#2f74bd" /><path d="M1825 984v14M1819 990.500h14" stroke="#d5e9fb" strokeWidth="1.300" /><path d="M1822.500 988h5v5h-5z" stroke="#d5e9fb" />
        <path d="M1819 999l9 1v8l-9-1z" fill="#f2b53c" /><path d="M1830 1002.500l4.500 5.500 8-10" stroke="#4fb45a" strokeWidth="3.200" />
      </Ic>
      <Ic v="1852 983 60 30" className={`ml-[3px] ${p}`}>
        <path d="M1857.500 991.500h19v14h-19z" stroke={W} strokeWidth="1.300" /><path d="M1873.500 994v4l-4-4zM1860.500 1003v-4l4 4z" fill={W} /><path d="M1868 998l4-3M1866 999l-4 3" stroke={W} />
        <path d="M1887 990h20M1887 998h20M1887 1006h20" stroke={W} strokeWidth="2.400" />
      </Ic>
    </div>
  );
}

function Task({ children, run, active }: Kids & { run?: boolean; active?: boolean }) {
  return (
    <div className="flex h-[59px] w-[55px] shrink-0 justify-center pt-[6px]">
      <div className={`flex h-12 w-12 flex-col items-center rounded-[5px] ${active ? "border border-[#e3e3e3] bg-[#f8f8f8]" : "border border-transparent"}`}>
        <div className="h-[42px]">{children}</div>
        {run && <div className="h-1 w-2 rounded-full bg-[#868686]" />}
        {active && <div className="h-1 w-5 rounded-full bg-[#0078d4]" />}
      </div>
    </div>
  );
}

function Badge({ x, w, children, fill = "#0078d4" }: Kids & { x: number; w: number; fill?: string }) {
  return (
    <>
      <rect x={x} y="1" width={w} height="20" rx="10" fill={fill} />
      <text x={x + w / 2} y="16" fontSize="14" fill="#fff" textAnchor="middle">{children}</text>
    </>
  );
}

function Chrome({ children }: Kids) {
  return (
    <Ic v="0 0 46 42">
      <circle cx="22" cy="22" r="15" fill="#2f9e4e" />
      <path d="M22 22L9 14.500A15 15 0 0 1 35 14.500z" fill="#e33b2e" />
      <path d="M22 14.500h13A15 15 0 0 1 22 37l6.500-11.300z" fill="#fbc116" />
      <circle cx="22" cy="22" r="7.200" fill="#fff" /><circle cx="22" cy="22" r="5.700" fill="#3579e8" />
      {children}
    </Ic>
  );
}

function Taskbar() {
  return (
    <footer className="flex h-[60px] shrink-0 border-t border-[#c4c4c4] bg-[#eeeeee] pl-5 text-[#1b1b1b]">
      <Ic v="20 1021 44 50">
        <defs>
          <linearGradient id="moon" x1="0" y1="0" x2="0" y2="1"><stop offset="0" stopColor="#f5b335" /><stop offset="1" stopColor="#ef7d1c" /></linearGradient>
        </defs>
        <path d="M25 1042q0-4 4-4 1-5 6-4 8-1 8 12l-14 .5q-4-.5-4-4.500z" fill="#a3bff0" />
        <path d="M28 1052q14 2 15-7l10 2a12.500 12.500 0 0 1-25 5z" fill="url(#moon)" />
        <circle cx="49" cy="1038" r="10" fill="#c42b1c" />
        <text x="49" y="1043" fontSize="13.500" fill="#fff" textAnchor="middle">1</text>
      </Ic>
      <div className="flex w-[383px] flex-col pt-[9px] text-[14.5px] leading-5 tracking-[0px]"><span>74°F</span><span className="text-[#606060]">Mostly clear</span></div>
      <Ic v="447 1021 47 59">
        <defs><linearGradient id="win" x1="447" y1="1036" x2="476" y2="1065" gradientUnits="userSpaceOnUse"><stop stopColor="#4fcdfb" /><stop offset="1" stopColor="#0070d0" /></linearGradient></defs>
        <path d="M447 1036h14v14h-14zM462 1036h14v14h-14zM447 1051h14v14h-14zM462 1051h14v14h-14z" fill="url(#win)" />
      </Ic>
      <div className="mt-[9px] flex h-[39px] w-[273px] items-center rounded-full border border-[#d5d5d5] bg-[#fbfbfb] text-[#5d5d5d]">
        <Ic v="0 0 20 20" className="ml-[13px]"><circle cx="8.500" cy="8" r="6.800" stroke="#222" strokeWidth="1.800" /><path d="M13 13l5 5.500" stroke="#222" strokeWidth="2.300" /></Ic>
        <span className="w-[172px] pl-[11px] pt-px text-[16px] tracking-[0px]">Search</span>
        <Ic v="0 0 62 32">
          <defs><linearGradient id="sky"><stop offset=".1" stopColor="#0b1f7d" /><stop offset=".5" stopColor="#7d5fd0" /><stop offset="1" stopColor="#b56ad6" /></linearGradient></defs>
          <path d="M0 20Q0 12 4 11 4 3 12 3 18-1 26 2q8-4 14 0 12-1 14 7 8 3 8 13-2 6-10 6l-2 4H10l-3-4Q0 26 0 20z" fill="url(#sky)" />
          <path d="M3 25q28-4 57 0-3 4-9 4l-2 3H9l-2-4z" fill="#234d38" />
          <circle cx="43" cy="13" r="8" fill="#fde08a" />
          <path d="M32 14q3-6 8-2l2-2 2 1q4-6 9-4-4 2-5 6-3-1-5 3-2-3-4 0-2-4-7-2z" fill="#2a1450" />
          <path d="M13 28q0-22 7-24 7 0 7 12 0 8 2 12-4 2-7 0-5 2-9 0z" fill="#f6f3fb" /><circle cx="18" cy="10" r="1.200" fill="#223" /><circle cx="22" cy="10" r="1.200" fill="#223" />
          <path d="M12 19q4-5 9 0" stroke="#eac36a" /><ellipse cx="17" cy="24" rx="5.500" ry="4.500" fill="#f18a1c" /><path d="M14 24q3 3 6 0" stroke="#6b3205" />
        </Ic>
      </div>
      <div className="flex w-[3px]" />
      <Task><Ic v="0 0 46 42"><path d="M8 16h23v21H8z" fill="#2d2d2b" /><path d="M16 9h21v19H16z" fill="#f3f3f3" /><path d="M16 16h15v12H16z" fill="#b1b1af" /><path d="M16 9h21v19H16z" stroke="#e0e0e0" strokeWidth=".6" /></Ic></Task>
      <Task>
        <Ic v="0 0 46 42">
          <defs>
            <linearGradient id="c1" x1="0" y1="0" x2="0" y2="1"><stop stopColor="#1fa5e8" /><stop offset=".6" stopColor="#6ccf5e" /><stop offset="1" stopColor="#e8c72e" /></linearGradient>
            <linearGradient id="c2" x1="0" y1="0" x2="0" y2="1"><stop stopColor="#a45ff0" /><stop offset=".6" stopColor="#f0609a" /><stop offset="1" stopColor="#f99a44" /></linearGradient>
          </defs>
          <path d="M15 9h12l-7 20h-8q-5-1-4-6l3-10q1-4 4-4z" fill="url(#c1)" />
          <path d="M31 36H19l7-20h8q5 1 4 6l-3 10q-1 4-4 4z" fill="url(#c2)" />
          <path d="M19 9h9q3 1 4 7h-5l-3 3z" fill="#1a49c8" /><path d="M12 29h8l3-5-1 9-3 3q-3 0-4-4z" fill="#f3812f" />
        </Ic>
      </Task>
      <Task run><Ic v="0 0 46 42"><path d="M8 10h10l3 3v6H8z" fill="#dd9b0a" /><path d="M8 14h13l2-1h15v24H8z" fill="#ffcc3b" /><path d="M14 29h18q1 0 1 2v6H13v-6q0-2 1-2z" fill="#1a72c4" /><path d="M16 32.500h14" stroke="#0c4a86" /></Ic></Task>
      <Task run>
        <Ic v="0 0 46 42">
          <defs><linearGradient id="edge" x1="0" x2="1"><stop stopColor="#1b8fd8" /><stop offset=".55" stopColor="#2cb9d8" /><stop offset="1" stopColor="#5ddc5e" /></linearGradient></defs>
          <path d="M8 22a15 15 0 0 1 30-1q0 7-8 7-6 0-4-4 2-6-5-6-8 1-8 9z" fill="url(#edge)" />
          <path d="M8 22q2-7 12-8-5 3-4 10 2 8 11 8 6 0 9-4-4 9-14 9Q10 36 8 22z" fill="#0f63b5" />
          <path d="M16 22q-1 6 4 10 4 3 10 2l6-5q-11 3-14-3-1-5 2-7-7-2-8 3z" fill="#14509c" />
        </Ic>
      </Task>
      <Task>
        <Ic v="0 0 46 42"><path d="M16 14v-4h12v4" stroke="#3bc0ee" strokeWidth="2" /><path d="M8 13h29v20q0 4-4 4H12q-4 0-4-4z" fill="#17497f" /><path d="M17 20h5v5h-5z" fill="#f25022" /><path d="M23.500 20h5v5h-5z" fill="#7fba00" /><path d="M17 26.500h5v5h-5z" fill="#31a8f0" /><path d="M23.500 26.500h5v5h-5z" fill="#ffb900" /><Badge x={24} w={20}>2</Badge></Ic>
      </Task>
      <Task><Ic v="0 0 46 42"><path d="M8 7h30v30H8z" fill="#1e3fae" /><path d="M17 13v17l-2 1V31z" fill="#0f1c60" /><text x="16.500" y="30" fontSize="24" fontWeight="700" fill="#fff" textLength="14" lengthAdjust="spacingAndGlyphs">L</text></Ic></Task>
      <Task><Ic v="0 0 46 42"><path d="M9 7l14 7 13-7v23l-13 7-14-7zM14.500 15v12l8.500 4.500 8-4.500V15l-8 5z" fill="#c22b2e" fillRule="evenodd" /></Ic></Task>
      <Task run>
        <Ic v="0 0 46 42"><path d="M9.500 36l2-7.500a13 13 0 1 1 5 5z" fill="#f3f6f3" stroke="#1b8a57" strokeWidth="3" /><path d="M17 15q2-2 3 0l1 3-1.500 2q2 4 5 5l2-2q4 1 4 3-1 4-6 3-7-2-9-9 0-3 1.500-5z" fill="#1b8a57" /><Badge x={21} w={23}>17</Badge></Ic>
      </Task>
      <Task><Ic v="0 0 46 42"><path d="M9 8h28v27H9z" fill="#a50f2c" /><g fill="#fff"><circle cx="18.500" cy="19" r="2.800" /><circle cx="27.500" cy="19" r="2.800" /><circle cx="23" cy="24" r="2.500" /><circle cx="14" cy="26" r="2" /><circle cx="32" cy="26" r="2" /></g><path d="M14 26q4 0 4.500-7l4.500 5 4.500-5q.5 7 4.500 7" stroke="#fff" strokeWidth="2" /></Ic></Task>
      <Task run><Chrome><circle cx="33" cy="11" r="10" fill="#111" /></Chrome></Task>
      <Task run>
        <Ic v="0 0 46 42" className="-translate-x-px"><path d="M17 8h17q2 0 2 3v8H14v-8q0-3 3-3z" fill="#4cc8fa" /><path d="M14 18h22v9H14z" fill="#3b8bf0" /><path d="M14 27h22v7q0 2-3 2H17q-3 0-3-2z" fill="#1451d8" /><rect x="10" y="21" width="12" height="13" rx="2" fill="#1249b0" /><text x="16" y="32" fontSize="10.500" fontWeight="700" fill="#fff" textAnchor="middle">W</text></Ic>
      </Task>
      <Task active>
        <Ic v="0 0 46 42"><path d="M9 9l4-2v20l-4 3z" fill="#f0487c" /><path d="M13 7h20v22H13z" fill="#e51050" /><path d="M33 11h3v26H12v-9h21z" fill="#7b0a2c" /><text x="23.500" y="24" fontSize="17" fontWeight="700" fill="#fff" textAnchor="middle">A</text><text x="24" y="35" fontSize="7.500" fontWeight="700" fill="#fff" textAnchor="middle">CAD</text></Ic>
      </Task>
      <Task run><Chrome><Badge x={23} w={20} fill="#5a2ca0">a</Badge></Chrome></Task>
      <Ic v="1568 1021 206 59" className="ml-[83px]">
        <g stroke="#1b1b1b" strokeWidth="1.500">
          <path d="M1573 1053l5-5.500 5 5.500" />
          <path d="M1610 1056q-4-6 2-9 3-6 9-2 8 0 7 6-1 5-6 5z" fill="#a2a2a2" stroke="none" /><path d="M1608 1041l20 17" />
          <path d="M1649 1048a9 9 0 0 1 17-3m1-5v6h-6M1650 1053v6m0-5h5m-4 2q3 4 8 3.500" />
          <circle cx="1663" cy="1055" r="5" fill="#0078d4" stroke="none" />
          <path d="M1689 1047q9-8 18 0M1692 1050.500q6-5.500 12 0M1695 1054q3-2.500 6 0" /><circle cx="1698" cy="1056" r="1.200" fill="#1b1b1b" />
          <path d="M1719 1047.500h3.500l4.500-4v14l-4.500-4h-3.500zM1730 1047q2 3.500 0 7" /><path d="M1733 1045q4 5.500 0 11" stroke="#777" /><path d="M1735.500 1043q5 7.500 0 15" stroke="#bbb" />
          <path d="M1755 1045h10v11h-15" /><path d="M1766 1048h2v5h-2" /><path d="M1749 1053q-2-8 5-12 2 8-3 12zM1751 1049l-2 8" fill="#1b1b1b" />
        </g>
      </Ic>
      <div className="flex w-[92px] flex-col whitespace-nowrap pt-[9px] text-right text-[14.5px] leading-5 tracking-[0px]"><span>8:50 PM</span><span>10/31/2025</span></div>
      <Ic v="1874 1021 40 59" className="ml-2"><path d="M1889 1041h-2q-5 0-5 6v5l-2 4h15l-2-4v-2M1885 1058q2 2 4 0" stroke="#1b1b1b" strokeWidth="1.500" /><path d="M1886 1046h4l-4 5h4M1891 1040h4l-4 4h4" stroke="#1b1b1b" strokeWidth="1.200" /></Ic>
    </footer>
  );
}

export default function App() {
  return (
    <div className="flex h-[1080px] w-[1920px] flex-col overflow-hidden font-['Noto_Sans',sans-serif] text-[14px] tracking-[-0.12px] text-[#ececec]">
      <div className="flex h-[1020px] shrink-0">
        <div className="flex w-[2px] flex-col bg-[#1d2229]"><div className="h-[175px] bg-[#eeeeee]" /></div>
        <div className="flex w-[1916px] flex-col border border-[#0c93dc] bg-[#222933]">
          <TitleBar />
          <RibbonTabs />
          <div className="ml-[4px] flex w-[1906px] shrink-0">
            <DrawPanel />
            <ModifyPanel />
            <AnnotationPanel />
            <LayersPanel />
            <BlockPanel />
            <PropertiesPanel />
            <GroupsPanel />
            <UtilitiesPanel />
            <ClipboardPanel />
            <ViewPanel />
          </div>
          <DocTabs />
          <div className="ml-[3px] h-[5px] w-[1908px] shrink-0 bg-[#3b4453]" />
          <Canvas />
          <div className="ml-[3px] h-[5px] w-[1908px] shrink-0 bg-[#3b4453]" />
          <LayoutTabs />
          <StatusBar />
        </div>
        <div className="w-[2px] bg-[#e4e6ea]" />
      </div>
      <Taskbar />
    </div>
  );
}
